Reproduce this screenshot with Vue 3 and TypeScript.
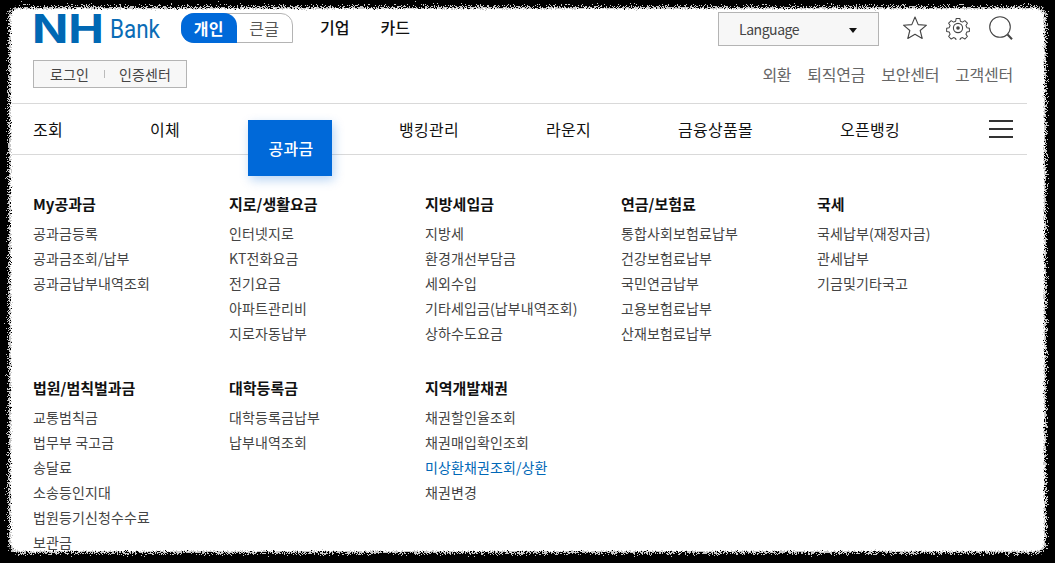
<script setup lang="ts">
interface Group { title: string; items: string[] }

const nav: string[] = ['조회', '이체', '공과금', '뱅킹관리', '라운지', '금융상품몰', '오픈뱅킹']
const utils: string[] = ['외환', '퇴직연금', '보안센터', '고객센터']
const rows: Group[][] = [
  [
    { title: 'My공과금', items: ['공과금등록', '공과금조회/납부', '공과금납부내역조회'] },
    { title: '지로/생활요금', items: ['인터넷지로', 'KT전화요금', '전기요금', '아파트관리비', '지로자동납부'] },
    { title: '지방세입금', items: ['지방세', '환경개선부담금', '세외수입', '기타세입금(납부내역조회)', '상하수도요금'] },
    { title: '연금/보험료', items: ['통합사회보험료납부', '건강보험료납부', '국민연금납부', '고용보험료납부', '산재보험료납부'] },
    { title: '국세', items: ['국세납부(재정자금)', '관세납부', '기금및기타국고'] },
  ],
  [
    { title: '법원/범칙벌과금', items: ['교통범칙금', '법무부 국고금', '송달료', '소송등인지대', '법원등기신청수수료', '보관금'] },
    { title: '대학등록금', items: ['대학등록금납부', '납부내역조회'] },
    { title: '지역개발채권', items: ['채권할인율조회', '채권매입확인조회', '미상환채권조회/상환', '채권변경'] },
  ],
]
const highlighted = '미상환채권조회/상환'
</script>

<template>
  <div class="page">
    <svg class="edge" width="1055" height="563" aria-hidden="true">
      <defs>
        <filter id="rough" x="-5%" y="-5%" width="110%" height="110%">
          <feTurbulence type="fractalNoise" baseFrequency="1.3" numOctaves="2" seed="4" result="n" />
          <feDisplacementMap in="SourceGraphic" in2="n" scale="14" xChannelSelector="R" yChannelSelector="G" />
        </filter>
        <filter id="rough2" x="-5%" y="-5%" width="110%" height="110%">
          <feTurbulence type="fractalNoise" baseFrequency="1.1" numOctaves="2" seed="9" result="n" />
          <feDisplacementMap in="SourceGraphic" in2="n" scale="6" xChannelSelector="R" yChannelSelector="G" />
          <feGaussianBlur stdDeviation="0.4" />
        </filter>
      </defs>
      <rect x="9" y="7" width="1037" height="546" rx="9" fill="#c8c8c8" filter="url(#rough)" />
      <rect x="11" y="9" width="1033" height="542" rx="8" fill="#fff" filter="url(#rough2)" />
    </svg>

    <div class="content">
      <header class="top">
        <div class="brand">
          <svg class="logo" width="128" height="34" viewBox="0 0 128 34">
            <text class="logo-nh" x="-1" y="31" textLength="72" lengthAdjust="spacingAndGlyphs">NH</text>
            <text class="logo-bank" x="77" y="26" textLength="50" lengthAdjust="spacingAndGlyphs">Bank</text>
          </svg>
          <div class="tabs">
            <span class="tab on">개인</span>
            <span class="tab">큰글</span>
          </div>
          <a class="biz first">기업</a>
          <a class="biz">카드</a>
        </div>
        <div class="tools">
          <div class="lang">
            <span>Language</span>
            <i class="caret"></i>
          </div>
          <svg class="ico star" width="26" height="26" viewBox="0 0 26 26" fill="none" stroke="#444" stroke-width="1.1" stroke-linejoin="round">
            <path d="M13 2l3.2 7.6 8.3.6-6.3 5.3 2 8-7.2-4.3-7.2 4.3 2-8L1.500 10.200l8.300-.6z" />
          </svg>
          <svg class="ico" width="24" height="24" viewBox="0 0 24 24" fill="none" stroke="#444" stroke-width="1.1" stroke-linejoin="round">
            <path d="M10 1.500h4l.6 3 2.300 1 2.600-1.600 2.800 2.800-1.600 2.600 1 2.300 2.800.6v3.600l-2.800.6-1 2.300 1.600 2.600-2.800 2.800-2.600-1.600-2.300 1-.6 2.500h-4l-.6-2.500-2.300-1-2.600 1.600-2.800-2.800 1.600-2.600-1-2.300-2.800-.6v-3.600l2.800-.6 1-2.300-1.600-2.600 2.800-2.800 2.600 1.600 2.300-1z" transform="translate(1.100 1.100) scale(.91)" />
            <circle cx="12" cy="12" r="4.600" />
            <circle cx="12" cy="12" r="1.800" fill="#444" stroke="none" />
          </svg>
          <svg class="ico" width="24" height="25" viewBox="0 0 24 25" fill="none" stroke="#444">
            <circle cx="11" cy="11" r="10.300" stroke-width="1.100" />
            <path d="M18.500 18.500l4.500 4.800" stroke-width="2" />
          </svg>
        </div>
      </header>

      <div class="sub">
        <div class="login">
          <span>로그인</span>
          <i class="sep"></i>
          <span>인증센터</span>
        </div>
        <nav class="utils">
          <a v-for="u in utils" :key="u">{{ u }}</a>
        </nav>
      </div>

      <div class="navbar">
        <nav class="main-nav">
          <a v-for="n in nav" :key="n" class="nav-item" :class="{ active: n === '공과금' }">
            <span class="nav-text">{{ n }}</span>
            <span v-if="n === '공과금'" class="active-box">{{ n }}</span>
          </a>
        </nav>
        <div class="burger"><i></i><i></i><i></i></div>
      </div>

      <section class="menu">
        <div v-for="(row, r) in rows" :key="r" class="menu-row">
          <div v-for="g in row" :key="g.title" class="group">
            <h3>{{ g.title }}</h3>
            <ul>
              <li v-for="it in g.items" :key="it" :class="{ hl: it === highlighted }">{{ it }}</li>
            </ul>
          </div>
        </div>
      </section>
    </div>
  </div>
</template>

<style>
html, body { margin: 0; background: #000; overflow: hidden; }
</style>

<style scoped>
.page {
  position: relative;
  width: 1055px;
  height: 563px;
  background: #000;
  overflow: hidden;
  font-family: "Noto Sans CJK KR", "Noto Sans", sans-serif;
  color: #111;
}
.edge { position: absolute; left: 0; top: 0; }
.content { position: relative; padding-top: 12px; height: 551px; box-sizing: border-box; }

.top { display: flex; justify-content: space-between; height: 34px; padding: 0 42px 0 33px; align-items: flex-start; }
.brand { display: flex; align-items: flex-start; }
.logo { display: block; overflow: visible; }
.logo-nh { font-family: Inter, sans-serif; font-weight: 700; font-size: 39px; fill: #0068b4; }
.logo-bank { font-family: Roboto, sans-serif; font-weight: 400; font-size: 26px; fill: #0a6cb6; }
.tabs {
  display: flex;
  margin: 1px 0 0 20px;
  width: 112px;
  height: 30px;
  box-sizing: border-box;
  border: 1px solid #b4b4b4;
  border-radius: 13px 12px 0 13px;
  font-size: 16px;
  line-height: 28px;
  letter-spacing: .2px;
}
.tab { width: 56px; text-align: center; color: #555; }
.tab.on {
  margin: -1px 0 -1px -1px;
  line-height: 30px;
  background: #0069d9;
  color: #fff;
  font-weight: 700;
  border-radius: 13px 13px 0 13px;
}
.biz { font-size: 16px; line-height: 30px; margin-left: 31px; font-weight: 500; color: #111; }
.biz.first { margin-left: 27px; }

.tools { display: flex; align-items: flex-start; gap: 19px; }
.lang {
  width: 161px;
  height: 34px;
  margin-right: 4px;
  box-sizing: border-box;
  border: 1px solid #b4b4b4;
  background: #f7f7f7;
  display: flex;
  align-items: center;
  justify-content: space-between;
  padding: 0 21px 0 20px;
  font-size: 14px;
  letter-spacing: -.45px;
  color: #444;
}
.caret { width: 0; height: 0; border: 4px solid transparent; border-top: 5px solid #111; border-bottom: 0; margin-top: 2px; }
.ico { display: block; margin-top: 4px; }
.star { margin-top: 3px; margin-right: -1px; }

.sub { display: flex; justify-content: space-between; align-items: center; height: 28px; margin-top: 14px; padding: 0 42px 0 33px; }
.login {
  display: flex;
  align-items: center;
  width: 154px;
  height: 28px;
  box-sizing: border-box;
  border: 1px solid #b4b4b4;
  background: #f7f7f7;
  padding-left: 16px;
  font-size: 14px;
  letter-spacing: .12px;
  color: #444;
}
.sep { width: 1px; height: 8px; background: #bbb; margin: 0 14px 0 15px; }
.utils { display: flex; gap: 16px; font-size: 16px; letter-spacing: -.25px; color: #666; }

.navbar {
  display: flex;
  justify-content: space-between;
  align-items: center;
  margin: 15px 28px 0 12px;
  padding: 0 14px 0 21px;
  height: 52px;
  box-sizing: border-box;
  border-top: 1px solid #d9d9d9;
  border-bottom: 1px solid #d9d9d9;
}
.main-nav { display: flex; gap: 87px; font-size: 16px; line-height: 24px; letter-spacing: .28px; }
.nav-item { position: relative; }
.nav-item.active .nav-text { visibility: hidden; }
.active-box {
  position: absolute;
  left: -19px;
  top: 3px;
  width: 84px;
  height: 56px;
  line-height: 57px;
  text-align: center;
  text-indent: 2px;
  font-weight: 500;
  background: #0069d9;
  color: #fff;
  box-shadow: 2px 4px 10px rgba(0, 105, 217, .28);
  z-index: 2;
}
.burger { display: flex; flex-direction: column; gap: 6px; width: 24px; }
.burger i { display: block; height: 2px; background: #333; }

.menu { padding: 37px 0 0 33px; }
.menu-row { display: grid; grid-template-columns: repeat(5, 196px); height: 184px; }
.group h3 { margin: 0 0 5px; font-size: 15px; line-height: 24px; font-weight: 700; color: #111; }
.group ul { margin: 0; padding: 0; list-style: none; }
.group li { font-size: 14px; line-height: 25px; color: #444; letter-spacing: .12px; }
.group li.hl { color: #0068b7; }
</style>
